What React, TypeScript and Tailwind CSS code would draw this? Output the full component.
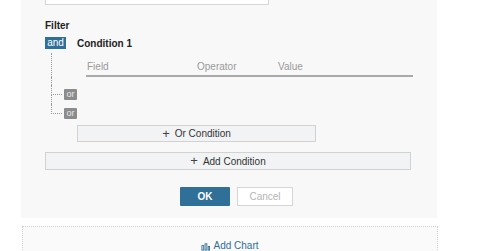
import React from "react";

const font = { fontFamily: '"Liberation Sans", Arial, sans-serif' };

function OrRow({ last }: { last?: boolean }) {
  return (
    <div className="flex h-[19px] items-stretch">
      <div className="flex w-[11px] flex-col">
        <div className="h-1/2 border-b border-l border-dotted border-[#9a9a9a]" />
        <div className={`h-1/2 ${last ? "" : "border-l border-dotted border-[#9a9a9a]"}`} />
      </div>
      <div className="flex items-center pl-[2px]">
        <span className="h-[11px] w-[13px] rounded-[1px] bg-[#8c8c8c] text-center text-[9px] leading-[10px] text-[#e8e8e8]">
          or
        </span>
      </div>
    </div>
  );
}

export default function App() {
  return (
    <div className="h-[251px] w-[481px] overflow-hidden bg-white" style={font}>
      {/* filter panel */}
      <div className="ml-[21px] flex h-[218px] w-[416px] flex-col bg-[#f8f8f8] pl-[24px]">
        <div className="-mt-[16px] h-[21px] w-[224px] border border-[#d6d6d6] bg-white" />

        <div className="mt-[15px] text-[10px] font-bold leading-[12px] text-[#222]">Filter</div>

        <div className="mt-[5px] flex h-[12px] items-center">
          <span className="h-[12px] w-[21px] bg-[#2f6f98] text-center text-[10px] leading-[11px] text-white">
            and
          </span>
          <span className="ml-[11px] text-[10px] font-bold text-[#222]">Condition 1</span>
        </div>

        <div className="ml-[6px] mt-[4px] flex flex-col">
          <div className="border-l border-dotted border-[#9a9a9a] pl-[34px] pt-[8px]">
            <div className="flex h-[16px] w-[327px] items-start border-b-2 border-[#aaaaaa] text-[10px] leading-[12px] text-[#9a9a9a]">
              <span className="ml-[1px] w-[110px]">Field</span>
              <span className="w-[81px]">Operator</span>
              <span>Value</span>
            </div>
          </div>
          <div className="h-[8px] border-l border-dotted border-[#9a9a9a]" />
          <OrRow />
          <OrRow last />
        </div>

        <button className="ml-[32px] mt-[2px] flex h-[17px] w-[239px] items-center justify-center gap-[5px] border border-[#d2d2d2] bg-[#f2f3f5] text-[10px] text-[#333]">
          <span className="text-[13px] leading-[10px] text-[#444]">+</span>
          Or Condition
        </button>

        <button className="mt-[10px] flex h-[18px] w-[366px] items-center justify-center gap-[5px] border border-[#d2d2d2] bg-[#f2f3f5] text-[10px] text-[#333]">
          <span className="text-[13px] leading-[10px] text-[#444]">+</span>
          Add Condition
        </button>

        <div className="ml-[135px] mt-[17px] flex gap-[7px]">
          <button className="h-[19px] w-[50px] rounded-[1px] bg-[#2f6f98] text-[10px] font-bold text-white">OK</button>
          <button className="h-[19px] w-[56px] border border-[#d6d6d6] bg-white text-[10px] text-[#b5b5b5]">Cancel</button>
        </div>
      </div>

      {/* add chart placeholder */}
      <div className="ml-[22px] mt-[8px] h-[60px] w-[416px] border border-dotted border-[#cfcfcf] bg-[#fafafa]">
        <div className="mt-[13px] flex items-center justify-center gap-[3px] text-[10px] leading-[12px] text-[#2f6f98]">
          <svg width="9" height="9" viewBox="0 0 10 10" fill="none" stroke="#2f6f98" strokeWidth="1">
            <rect x="1" y="4" width="2" height="5" />
            <rect x="4.5" y="2" width="2" height="7" />
            <rect x="8" y="5" width="1.5" height="4" />
          </svg>
          Add Chart
        </div>
      </div>
    </div>
  );
}
